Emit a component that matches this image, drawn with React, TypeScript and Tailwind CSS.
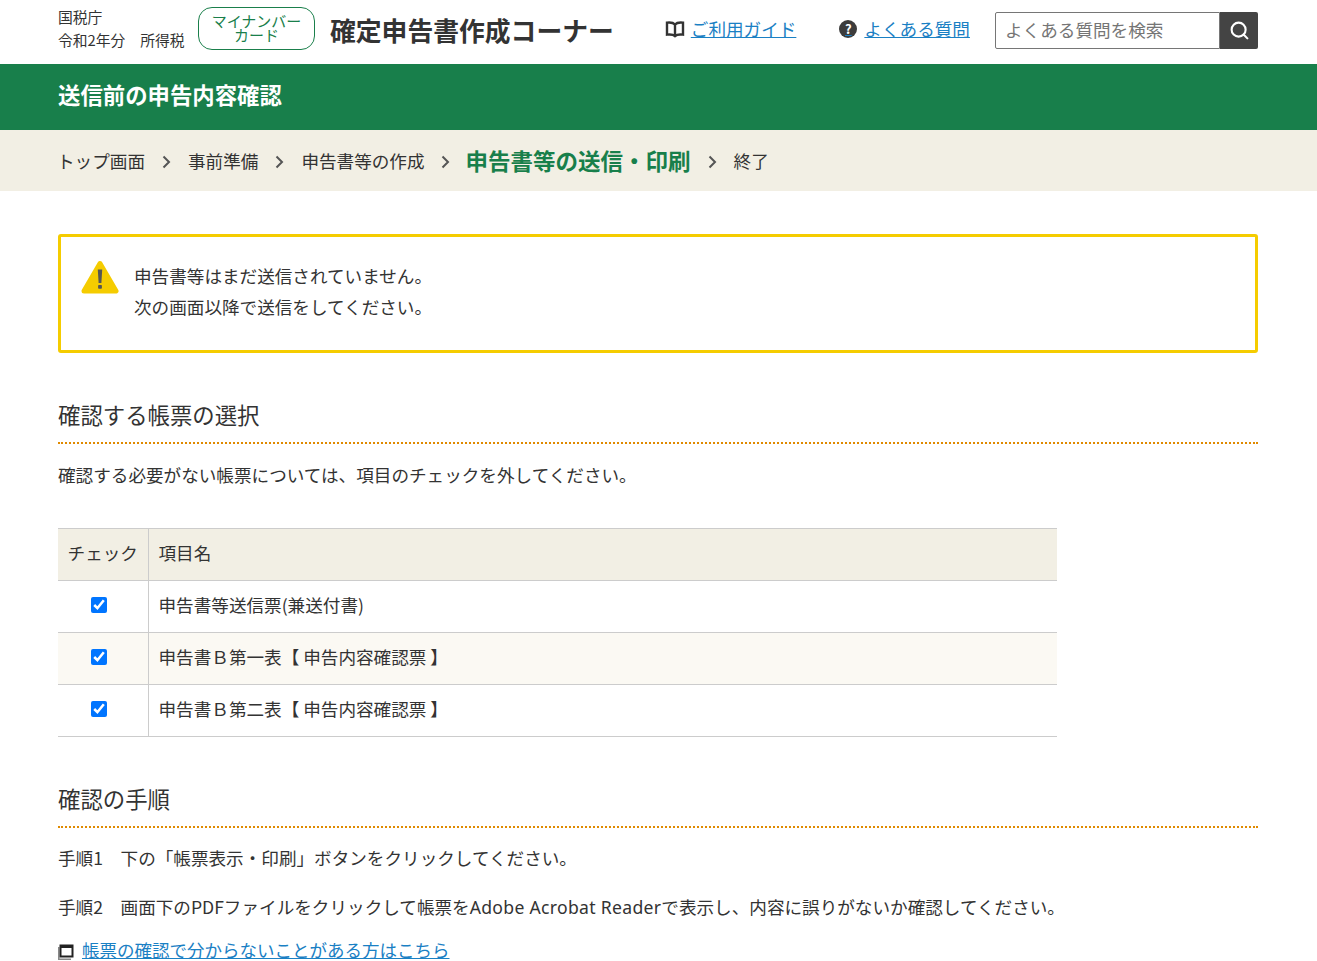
import { Search } from 'lucide-react'

const font = '[font-family:"Noto_Sans_CJK_JP","Noto_Sans",sans-serif]'

const rows = [
  { name: '申告書等送信票(兼送付書)', tint: false },
  { name: '申告書Ｂ第一表【 申告内容確認票 】', tint: true },
  { name: '申告書Ｂ第二表【 申告内容確認票 】', tint: false },
]

function BookIcon() {
  return (
    <svg width="20" height="18" viewBox="0 0 20 18" fill="none" stroke="#333" strokeWidth="2.4" className="mr-[6px] shrink-0">
      <path d="M10 4.5C8.5 2.8 5.5 2.2 2 2.6V14.6C5.5 14.2 8.5 14.6 10 16C11.5 14.6 14.5 14.2 18 14.6V2.6C14.5 2.2 11.5 2.8 10 4.5Z" />
      <path d="M10 4.5V16" />
    </svg>
  )
}

function HelpIcon() {
  return (
    <span className="mr-[7px] flex h-[18px] w-[18px] shrink-0 items-center justify-center rounded-full bg-[#3c3c3c] text-[13px] leading-none font-bold text-white">
      ?
    </span>
  )
}

function WarningIcon() {
  return (
    <svg width="38" height="35" viewBox="0 0 38 35" className="mt-[2px] shrink-0">
      <path d="M19 3.5L35 31H3Z" fill="#f5cc00" stroke="#f5cc00" strokeWidth="5" strokeLinejoin="round" />
      <path d="M16.8 9.5H21.2L20.4 23H17.6Z" fill="#555" />
      <rect x="17.1" y="25" width="3.8" height="3.8" rx="0.8" fill="#555" />
    </svg>
  )
}

function Chevron() {
  return (
    <svg width="9" height="14" viewBox="0 0 9 14" fill="none" stroke="#555" strokeWidth="2" className="mt-[2px] shrink-0">
      <path d="M1.5 1.5L7 7L1.5 12.5" />
    </svg>
  )
}

function SectionTitle({ children }: { children: string }) {
  return (
    <h2 className="border-b-2 border-dotted border-[#e08a00] pb-[12px] text-[22.4px] leading-[31px] font-normal text-[#333]">
      {children}
    </h2>
  )
}

export default function App() {
  return (
    <div className={`${font} h-[961px] overflow-hidden bg-white text-[17.6px] text-[#333]`}>
      <header className="flex h-[64px] items-center pr-[59px] pb-[4px] pl-[58px]">
        <div className="mb-[4px] w-[140px] text-[14.8px] leading-[23px]">
          <div>国税庁</div>
          <div className="whitespace-pre">令和2年分　所得税</div>
        </div>
        <div className="mb-[4px] flex h-[43px] w-[117px] flex-col items-center justify-center rounded-[14px] border border-[#1a7f4b] text-[15px] leading-[14px] text-[#1a7f4b]">
          <span>マイナンバー</span>
          <span>カード</span>
        </div>
        <div className="ml-[15px] text-[25.8px] font-bold whitespace-nowrap">確定申告書作成コーナー</div>
        <a className="mb-[2px] ml-[51px] flex items-center whitespace-nowrap text-[#1a80c4] underline">
          <BookIcon />
          ご利用ガイド
        </a>
        <a className="mb-[2px] ml-[43px] flex items-center whitespace-nowrap text-[#1a80c4] underline">
          <HelpIcon />
          よくある質問
        </a>
        <div className="ml-auto flex h-[37px] w-[263px]">
          <div className="flex flex-1 items-center rounded-l-[2px] border border-[#767676] pl-[9px] text-[#757575]">
            よくある質問を検索
          </div>
          <div className="flex w-[38px] items-center justify-center rounded-r-[2px] bg-[#444]">
            <Search size={21} color="#fff" strokeWidth={2.4} />
          </div>
        </div>
      </header>

      <div className="flex h-[66px] items-center bg-[#187f4b] pb-[4px] pl-[58px] text-[22.4px] font-bold text-white">
        送信前の申告内容確認
      </div>

      <nav className="flex h-[61px] items-center bg-[#f2efe4] pl-[57px]">
        <span className="mt-[2px]">トップ画面</span>
        <span className="mx-[17px]"><Chevron /></span>
        <span className="mt-[2px]">事前準備</span>
        <span className="mx-[17px]"><Chevron /></span>
        <span className="mt-[2px]">申告書等の作成</span>
        <span className="mx-[16px]"><Chevron /></span>
        <span className="text-[22.5px] font-bold text-[#187f4b]">申告書等の送信・印刷</span>
        <span className="mx-[17px]"><Chevron /></span>
        <span className="mt-[2px]">終了</span>
      </nav>

      <main className="mx-[58px] w-[1200px] pt-[43px]">
        <div className="flex h-[119px] items-start rounded-[3px] border-[3px] border-[#f5cc00] pt-[21px] pl-[20px]">
          <WarningIcon />
          <p className="mt-[2px] ml-[15px] leading-[31px]">
            申告書等はまだ送信されていません。
            <br />
            次の画面以降で送信をしてください。
          </p>
        </div>

        <section className="mt-[46px]">
          <SectionTitle>確認する帳票の選択</SectionTitle>
          <p className="mt-[17px] leading-[28px]">確認する必要がない帳票については、項目のチェックを外してください。</p>

          <table className="mt-[39px] w-[999px] border-collapse">
            <thead>
              <tr className="h-[52px] border-y border-[#ccc] bg-[#f2efe4]">
                <th className="w-[90px] border-r border-[#ccc] pb-[2px] text-center font-normal">チェック</th>
                <th className="pb-[2px] pl-[10px] text-left font-normal">項目名</th>
              </tr>
            </thead>
            <tbody>
              {rows.map((row) => (
                <tr key={row.name} className={`h-[52px] border-b border-[#ccc] ${row.tint ? 'bg-[#fbf9f3]' : 'bg-white'}`}>
                  <td className="border-r border-[#ccc]">
                    <div className="flex justify-center pr-[8px] pb-[3px]">
                      <input type="checkbox" defaultChecked className="h-[16px] w-[16px]" />
                    </div>
                  </td>
                  <td className="pb-[2px] pl-[10px]">{row.name}</td>
                </tr>
              ))}
            </tbody>
          </table>
        </section>

        <section className="mt-[46px]">
          <SectionTitle>確認の手順</SectionTitle>
          <p className="mt-[16px] leading-[28px] whitespace-pre">手順1　下の「帳票表示・印刷」ボタンをクリックしてください。</p>
          <p className="mt-[21px] leading-[28px] whitespace-pre">
            手順2　画面下のPDFファイルをクリックして帳票を<span className="tracking-[0.3px] [font-family:'Noto_Sans',sans-serif]">Adobe Acrobat Reader</span>で表示し、内容に誤りがないか確認してください。
          </p>
          <div className="mt-[15px] flex items-center">
            <svg width="16" height="16" viewBox="0 0 16 16" fill="none" className="mt-[4px] mr-[8px] shrink-0">
              <path d="M0.75 3V15.25H13" stroke="#888" strokeWidth="1.5" />
              <rect x="2.5" y="1.5" width="12" height="11" stroke="#222" strokeWidth="2" />
              <path d="M2 2.5H15" stroke="#222" strokeWidth="3" />
            </svg>
            <a className="text-[17.5px] leading-[28px] text-[#1a80c4] underline">帳票の確認で分からないことがある方はこちら</a>
          </div>
        </section>
      </main>
    </div>
  )
}
